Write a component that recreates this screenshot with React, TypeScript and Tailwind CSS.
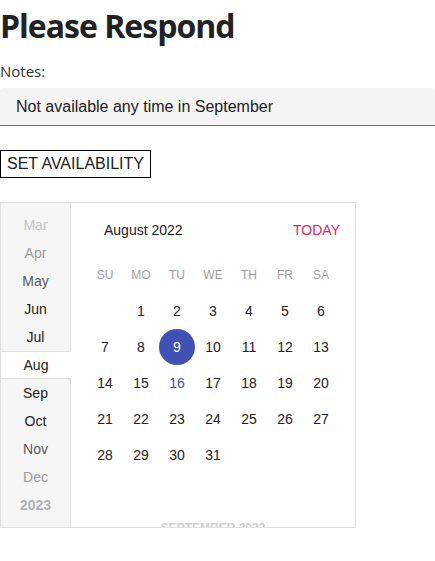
import React from 'react';

const months = [
  { label: 'Mar', color: 'text-[#c4c4c4]' },
  { label: 'Apr', color: 'text-[#9a9a9a]' },
  { label: 'May', color: 'text-[#5a5a5a]' },
  { label: 'Jun', color: 'text-[#222]' },
  { label: 'Jul', color: 'text-[#222]' },
  { label: 'Aug', color: 'text-[#222]', active: true },
  { label: 'Sep', color: 'text-[#222]' },
  { label: 'Oct', color: 'text-[#222]' },
  { label: 'Nov', color: 'text-[#555]' },
  { label: 'Dec', color: 'text-[#9a9a9a]' },
];

const weekdays = ['SU', 'MO', 'TU', 'WE', 'TH', 'FR', 'SA'];

// August 2022 starts on a Monday
const days: (number | null)[] = [null, ...Array.from({ length: 31 }, (_, i) => i + 1)];

export default function App() {
  return (
    <div className="bg-white min-h-screen text-[#212121]" style={{ fontFamily: '"Liberation Sans", Arial, sans-serif' }}>
      <h1 className="text-[32px] font-bold leading-[52px] text-[#222]" style={{ fontFamily: '"Open Sans", sans-serif', letterSpacing: '-1px' }}>
        Please Respond
      </h1>
      <p className="mt-[9px] text-[15px] leading-[20px] text-[#333]" style={{ fontFamily: '"Open Sans", sans-serif' }}>Notes:</p>

      <div className="mt-[7px] h-[38px] bg-[#f4f4f4] rounded-t-[4px] border-b border-[#757575] flex items-center pl-4 text-[16px] text-[#212121]">
        Not available any time in September
      </div>

      <button className="mt-[24px] h-[28px] border border-black px-[6px] text-[16px] text-[#212121] leading-none">
        SET AVAILABILITY
      </button>

      <div className="mt-[24px] w-[356px] h-[326px] border border-[#e0e0e0] flex overflow-hidden">
        {/* Month list */}
        <div className="w-[70px] shrink-0 bg-[#f5f5f5] border-r border-[#e0e0e0] pt-[8px] flex flex-col text-[14px]">
          {months.map((m) =>
            m.active ? (
              <div key={m.label} className="h-[28px] mr-[-1px] bg-white border-y border-[#e0e0e0] flex items-center justify-center text-[#222]">
                {m.label}
              </div>
            ) : (
              <div key={m.label} className={`h-[28px] flex items-center justify-center ${m.color}`}>
                {m.label}
              </div>
            )
          )}
          <div className="h-[28px] flex items-center justify-center font-bold text-[#b0b0b0]">2023</div>
        </div>

        {/* Month view */}
        <div className="flex-1 pl-[16px] pr-[15px] pt-[9px]">
          <div className="h-9 flex items-center justify-between text-[14px]">
            <span className="pl-[17px] text-[#222]">August 2022</span>
            <span className="text-[#e91e63]">TODAY</span>
          </div>
          <div className="mt-[9px] grid grid-cols-7 w-[252px]">
            {weekdays.map((d) => (
              <div key={d} className="h-9 flex items-center justify-center text-[12px] text-[#9e9e9e]">
                {d}
              </div>
            ))}
            {days.map((d, i) => (
              <div key={i} className="h-9 flex items-center justify-center text-[14px]">
                {d === 9 ? (
                  <span className="w-9 h-9 rounded-full bg-[#3f51b5] text-white flex items-center justify-center">9</span>
                ) : (
                  <span className={d === 16 ? 'text-[#3f51b5]' : 'text-[#222]'}>{d ?? ''}</span>
                )}
              </div>
            ))}
          </div>
          <div className="mt-[46px] w-[252px] text-center text-[12px] font-bold text-[#d0d0d0]">SEPTEMBER 2022</div>
        </div>
      </div>
    </div>
  );
}
